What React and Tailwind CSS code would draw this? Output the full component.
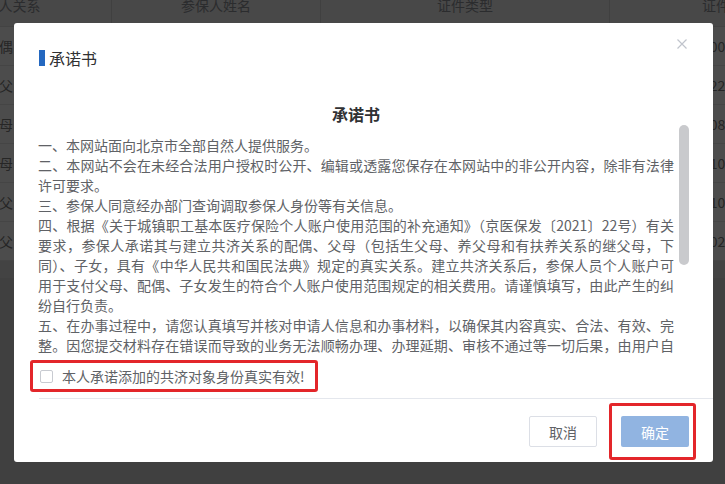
import React from "react";

const rows = [
  { rel: "配偶", name: "张秀兰", type: "居民身份证", id: "110105001901010021" },
  { rel: "岳父", name: "李建国", type: "居民身份证", id: "110105224901050012" },
  { rel: "岳母", name: "王淑芬", type: "居民身份证", id: "110105085503110026" },
  { rel: "继母", name: "赵桂英", type: "居民身份证", id: "110105101907220048" },
  { rel: "养父", name: "刘德明", type: "居民身份证", id: "110105106110080015" },
  { rel: "继父", name: "陈志强", type: "居民身份证", id: "110105023312160033" },
];

const paragraphs = [
  { text: "一、本网站面向北京市全部自然人提供服务。", full: false },
  { text: "二、本网站不会在未经合法用户授权时公开、编辑或透露您保存在本网站中的非公开内容，除非有法律", full: true },
  { text: "许可要求。", full: false },
  { text: "三、参保人同意经办部门查询调取参保人身份等有关信息。", full: false },
  { text: "四、根据《关于城镇职工基本医疗保险个人账户使用范围的补充通知》（京医保发〔2021〕22号）有关", full: true },
  { text: "要求，参保人承诺其与建立共济关系的配偶、父母（包括生父母、养父母和有扶养关系的继父母，下", full: true },
  { text: "同）、子女，具有《中华人民共和国民法典》规定的真实关系。建立共济关系后，参保人员个人账户可", full: true },
  { text: "用于支付父母、配偶、子女发生的符合个人账户使用范围规定的相关费用。请谨慎填写，由此产生的纠", full: true },
  { text: "纷自行负责。", full: false },
  { text: "五、在办事过程中，请您认真填写并核对申请人信息和办事材料，以确保其内容真实、合法、有效、完", full: true },
  { text: "整。因您提交材料存在错误而导致的业务无法顺畅办理、办理延期、审核不通过等一切后果，由用户自", full: true },
  { text: "行承担。", full: false },
];

const BackgroundTable = () => (
  <div className="ml-[-114px] w-[964px] bg-white text-sm text-[#808080]">
    <div className="flex h-[27px] bg-[#f0f0f0] border-b border-[#e0e0e0] text-[#909399]">
      <div className="w-[226px] border-r border-[#d6d6d6] text-center leading-[10px]">与参保人关系</div>
      <div className="w-[209px] border-r border-[#d6d6d6] text-center leading-[10px]">参保人姓名</div>
      <div className="w-[289px] border-r border-[#d6d6d6] text-center leading-[10px]">证件类型</div>
      <div className="w-[240px] text-center leading-[10px]">证件号码</div>
    </div>
    {rows.map((r) => (
      <div key={r.id} className="flex h-[39px] items-center border-b border-[#e6e6e6]">
        <div className="w-[226px] text-center">{r.rel}</div>
        <div className="w-[209px] text-center">{r.name}</div>
        <div className="w-[289px] text-center">{r.type}</div>
        <div className="w-[240px] pl-[6px] text-center">{r.id}</div>
      </div>
    ))}
    <div className="h-[17px] bg-[#e2e2e2]" />
  </div>
);

const App = () => {
  return (
    <div className="relative h-[484px] w-[725px] overflow-hidden bg-[#d6d6d6] font-['Noto_Sans_CJK_SC',sans-serif]">
      <BackgroundTable />
      <div className="absolute inset-0 bg-black/70" />

      <div className="absolute left-[14px] top-[23px] w-[699px] rounded-[3px] bg-white">
        {/* header */}
        <div className="relative flex h-[70px] items-center pl-[25px]">
          <span className="h-[16px] w-[6px] bg-[#2468c0]" />
          <span className="ml-[4px] text-base text-[#303133]">承诺书</span>
          <svg
            className="absolute right-[26px] top-[16px] h-[10px] w-[10px]"
            viewBox="0 0 10 10"
            fill="none"
            stroke="#c0c4cc"
            strokeWidth="1.2"
          >
            <path d="M0.5 0.5L9.5 9.5M9.5 0.5L0.5 9.5" />
          </svg>
        </div>

        {/* body */}
        <div className="flex h-[262px]">
          <div className="ml-[24px] w-[636px] overflow-hidden">
            <div className="flex h-[42px] items-center justify-center text-base font-semibold text-[#303133]">
              承诺书
            </div>
            <div className="text-sm leading-[20px] text-[#606266]">
              {paragraphs.map((p, i) => (
                <p key={i} className={p.full ? "text-justify [text-align-last:justify]" : ""}>
                  {p.text}
                </p>
              ))}
            </div>
          </div>
          <div className="ml-[5px] w-[10px]">
            <div className="mt-[32px] h-[140px] w-[10px] rounded-full bg-[#c9cacd]" />
          </div>
        </div>

        {/* agreement */}
        <div className="ml-[16px] mt-[5px] flex h-[32px] w-[288px] items-center rounded-[3px] border-[3px] border-[#e3262a] pl-[7px]">
          <span className="h-[13px] w-[13px] rounded-[2px] border border-[#c8cbd1] bg-white" />
          <span className="ml-[9px] text-sm text-[#606266]">本人承诺添加的共济对象身份真实有效!</span>
        </div>

        {/* footer */}
        <div className="ml-[25px] mt-[6px] border-t border-[#e4e7ed]" />
        <div className="flex items-center justify-end pb-[2px] pr-[17px] pt-[4px]">
          <button className="h-[31px] w-[68px] rounded-[2px] border border-[#dcdfe6] bg-white text-sm text-[#606266]">
            取消
          </button>
          <div className="ml-[12px] rounded-[3px] border-[3px] border-[#e3262a] pb-[10px] pl-[9px] pr-[4px] pt-[10px]">
            <button className="block h-[31px] w-[68px] rounded-[2px] bg-[#91b4e1] text-sm text-white">
              确定
            </button>
          </div>
        </div>
      </div>
    </div>
  );
};

export default App;
